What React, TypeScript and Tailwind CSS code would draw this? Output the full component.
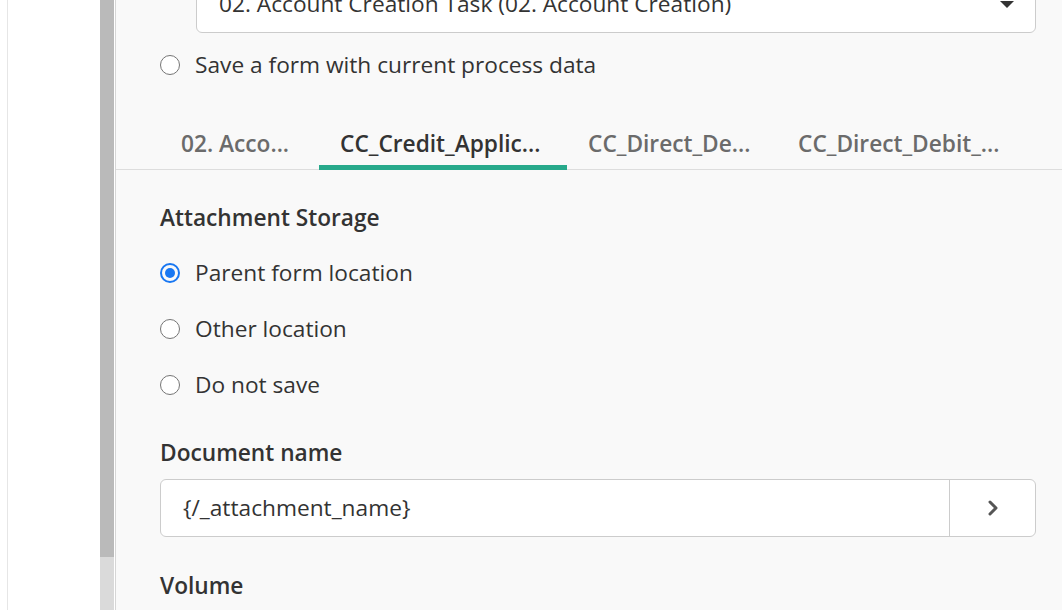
import React, { useState } from 'react';

const tabs = [
  { label: '02. Acco...', w: 'w-[159px]' },
  { label: 'CC_Credit_Applic...', w: 'w-[248px]' },
  { label: 'CC_Direct_De...', w: 'w-[210px]' },
  { label: 'CC_Direct_Debit_...', w: 'w-[247px]' },
];

const storageOptions = ['Parent form location', 'Other location', 'Do not save'];

function Radio({ checked, label, onClick }: { checked: boolean; label: string; onClick: () => void }) {
  return (
    <button onClick={onClick} className="flex h-[56px] items-center text-left">
      {checked ? (
        <span className="flex h-[20px] w-[20px] items-center justify-center rounded-full border-2 border-[#1877f2]">
          <span className="h-[10px] w-[10px] rounded-full bg-[#1877f2]" />
        </span>
      ) : (
        <span className="h-[20px] w-[20px] rounded-full border-[1.5px] border-[#757575] bg-white" />
      )}
      <span className="ml-[15px] text-[22.7px] leading-[30px] text-[#333]">{label}</span>
    </button>
  );
}

export default function App() {
  const [activeTab, setActiveTab] = useState(1);
  const [storage, setStorage] = useState(0);
  const [saveForm, setSaveForm] = useState(false);

  return (
    <div className="flex h-[610px] w-[1062px] overflow-hidden bg-white font-['Open_Sans',sans-serif]">
      {/* left strip + scrollbar */}
      <div className="w-[7px] shrink-0 bg-white" />
      <div className="w-px shrink-0 bg-[#e6e6e6]" />
      <div className="w-[92px] shrink-0 bg-white" />
      <div className="flex w-[14px] shrink-0 flex-col">
        <div className="h-[557px] bg-[#bababa]" />
        <div className="flex-1 bg-[#dadada]" />
      </div>
      <div className="w-px shrink-0 bg-white" />
      <div className="w-px shrink-0 bg-[#d6d6d6]" />

      {/* panel */}
      <div className="flex min-w-0 flex-1 flex-col bg-[#f9f9f9]">
        <div className="ml-[80px] mr-[26px] mt-[-25px] flex h-[58px] shrink-0 items-center justify-between rounded-md border border-[#cccccc] bg-white pl-[22px] pr-[21px]">
          <span className="whitespace-nowrap text-[22.7px] leading-[30px] text-[#333]">02. Account Creation Task (02. Account Creation)</span>
          <svg width="14" height="7" viewBox="0 0 14 7" className="shrink-0">
            <path d="M0 0h14L7 7z" fill="#333" />
          </svg>
        </div>

        <div className="ml-[44px] mt-[20px] flex h-[24px] items-center">
          <button onClick={() => setSaveForm(!saveForm)} className="flex items-center">
            <span className="h-[20px] w-[20px] rounded-full border-[1.5px] border-[#757575] bg-white" />
            <span className="ml-[15px] text-[22.7px] leading-[30px] text-[#333]">Save a form with current process data</span>
          </button>
        </div>

        <div className="mt-[39px] flex border-b border-[#dddddd] pl-[44px]">
          {tabs.map((t, i) => (
            <button
              key={t.label}
              onClick={() => setActiveTab(i)}
              className={`${t.w} -mb-px flex h-[54px] shrink-0 items-center border-b-[5px] px-[21px] pt-[6px] text-left text-[22.7px] font-semibold leading-[30px] ${
                i === activeTab ? 'border-[#27a98b] text-[#333]' : 'border-transparent text-[#6b6b6b]'
              }`}
            >
              <span className="whitespace-nowrap">{t.label}</span>
            </button>
          ))}
        </div>

        <div className="flex flex-col pl-[44px] pr-[26px]">
          <div className="mt-[33px] text-[22.7px] font-semibold leading-[30px] text-[#333]">Attachment Storage</div>
          <div className="mt-[12px] flex flex-col">
            {storageOptions.map((o, i) => (
              <Radio key={o} label={o} checked={storage === i} onClick={() => setStorage(i)} />
            ))}
          </div>

          <div className="mt-[25px] text-[22.7px] font-semibold leading-[30px] text-[#333]">Document name</div>
          <div className="mt-[11px] flex h-[58px] rounded-md border border-[#cccccc] bg-white">
            <div className="flex flex-1 items-center pl-[22px] text-[22.7px] leading-[30px] text-[#333]">
              {'{/_attachment_name}'}
            </div>
            <div className="flex w-[86px] items-center justify-center border-l border-[#cccccc]">
              <svg width="12" height="18" viewBox="0 0 12 18">
                <path d="M3 3l6 6-6 6" fill="none" stroke="#555" strokeWidth="3" strokeLinecap="round" strokeLinejoin="round" />
              </svg>
            </div>
          </div>

          <div className="mt-[34px] text-[22.7px] font-semibold leading-[30px] text-[#333]">Volume</div>
        </div>
      </div>
    </div>
  );
}
